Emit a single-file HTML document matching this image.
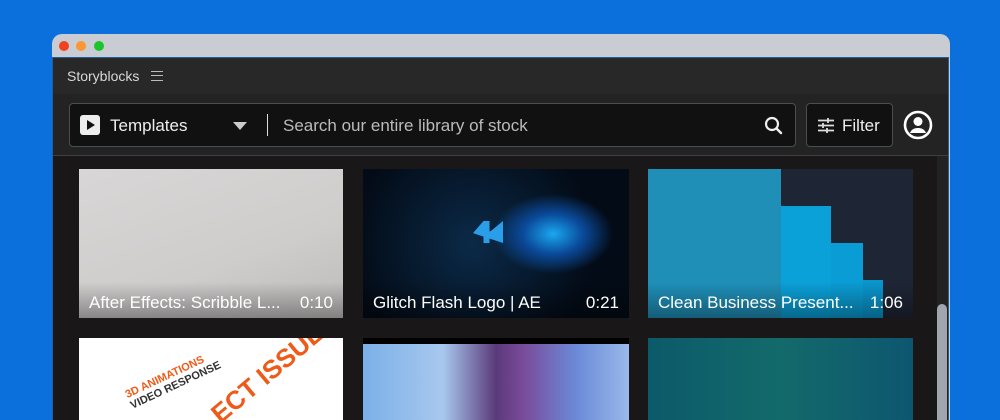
<!DOCTYPE html>
<html><head><meta charset="utf-8"><style>
*{margin:0;padding:0;box-sizing:border-box}
html,body{width:1000px;height:420px;overflow:hidden}
body{background:#0b6fdc;font-family:"Liberation Sans",sans-serif;position:relative}
.win{position:absolute;left:52px;top:34px;width:898px;height:386px;background:#c9cdd3;border-radius:10px 10px 0 0;overflow:hidden}
.dot{position:absolute;top:7px;width:10px;height:10px;border-radius:50%}
.app{position:absolute;left:0;top:23px;width:897px;height:363px;background:#1a1718;border:1px solid #1f5f9e;border-bottom:none;overflow:hidden}
.hdr{position:absolute;left:0;top:0;width:100%;height:36px;background:#282828;color:#d8d8d8;font-size:14px}
.bar{position:absolute;left:0;top:36px;width:100%;height:62px;background:#232323;border-bottom:1px solid #3d3f42}
.search{position:absolute;left:16px;top:9px;width:727px;height:44px;background:#111;border:1px solid #4a4e52;border-radius:4px}
.filter{position:absolute;left:753px;top:9px;width:87px;height:44px;background:#111;border:1px solid #4a4e52;border-radius:4px;color:#eee;font-size:17px}
.card{position:absolute;width:264px;height:149px;overflow:hidden}
.cap{position:absolute;left:0;right:0;bottom:0;height:36px;color:#fff;font-size:17px;padding:11px 10px 0;display:flex;justify-content:space-between;background:linear-gradient(transparent,rgba(0,0,0,.35))}
</style></head><body>
<div class="win">
<div class="dot" style="left:7px;background:#f0421f"></div>
<div class="dot" style="left:24px;background:#fa9634"></div>
<div class="dot" style="left:42px;background:#19c52b"></div>
<div class="app">
<div class="hdr"><span style="position:absolute;left:14px;top:10px">Storyblocks</span>
<span style="position:absolute;left:98px;top:13px;width:12px;height:10px;border-top:1.5px solid #bbb;border-bottom:1.5px solid #bbb"><span style="position:absolute;left:0;top:2.8px;width:12px;border-top:1.5px solid #bbb"></span></span></div>
<div class="bar">
<div class="search">
<div style="position:absolute;left:10px;top:11px;width:20px;height:20px;background:#eee;border-radius:3px"><div style="position:absolute;left:7px;top:5px;border-left:8px solid #111;border-top:5px solid transparent;border-bottom:5px solid transparent"></div></div>
<span style="position:absolute;left:40px;top:12px;color:#eee;font-size:17px">Templates</span>
<div style="position:absolute;left:163px;top:18px;border-top:8px solid #ccc;border-left:7px solid transparent;border-right:7px solid transparent"></div>
<div style="position:absolute;left:197px;top:10px;height:22px;border-left:1.5px solid #ddd"></div>
<span style="position:absolute;left:213px;top:12px;color:#bbb;font-size:17px">Search our entire library of stock</span>
<svg style="position:absolute;left:694px;top:12px" width="20" height="20" viewBox="0 0 20 20"><circle cx="8" cy="8" r="6" fill="none" stroke="#eee" stroke-width="2.2"/><path d="M12.5 12.5 17 17" stroke="#eee" stroke-width="2.4" stroke-linecap="round"/></svg>
</div>
<div class="filter">
<svg style="position:absolute;left:11px;top:14px" width="16" height="15" viewBox="0 0 16 15"><path d="M0 2.5h16M0 7.5h16M0 12.5h16" stroke="#ddd" stroke-width="1.8"/><path d="M10 0v5M5 5v5M9 10v5" stroke="#ddd" stroke-width="1.8"/></svg>
<span style="position:absolute;left:35px;top:12px">Filter</span></div>
<svg style="position:absolute;left:850px;top:16px" width="30" height="30" viewBox="0 0 30 30"><circle cx="15" cy="15" r="13" fill="none" stroke="#fff" stroke-width="2.6"/><circle cx="15" cy="11.5" r="4.5" fill="#fff"/><path d="M7 23c1.5-4 5-5 8-5s6.5 1 8 5z" fill="#fff"/></svg>
</div>
<div class="card" style="left:26px;top:111px;background:linear-gradient(160deg,#d8d6d6,#cfcccc 60%,#bdbbba)"><div class="cap" style="background:linear-gradient(transparent,rgba(90,90,90,.6))"><span>After Effects: Scribble L...</span><span>0:10</span></div></div>
<div class="card" style="left:310px;top:111px;width:266px;background:radial-gradient(ellipse 60px 40px at 190px 65px,#1aa8f0,#0a4a9a 50%,transparent 100%),radial-gradient(circle at 110px 75px,#0b2a48,#030b16 70%)"><div style="position:absolute;left:110px;top:52px;width:30px;height:22px;background:#2a9ee8;clip-path:polygon(0 55%,35% 0,55% 0,55% 100%,35% 100%,35% 60%,60% 45%,100% 0,100% 100%)"></div><div class="cap"><span>Glitch Flash Logo | AE</span><span>0:21</span></div></div>
<div class="card" style="left:595px;top:111px;width:265px;background:#1e2535"><div style="position:absolute;left:0;top:0;width:133px;height:149px;background:#1f8fb8"></div><div style="position:absolute;left:133px;top:37px;width:50px;height:112px;background:#0aa0d8"></div><div style="position:absolute;left:183px;top:74px;width:32px;height:75px;background:#0a9cd4"></div><div style="position:absolute;left:215px;top:111px;width:20px;height:38px;background:#0a96cc"></div><div class="cap"><span>Clean Business Present...</span><span>1:06</span></div></div>
<div class="card" style="left:26px;top:280px;background:#fff"><div style="position:absolute;left:45px;top:30px;transform:rotate(-25deg);color:#f05a18;font-weight:bold;font-size:11px;line-height:12px">3D ANIMATIONS<br><span style="color:#333">VIDEO RESPONSE</span></div><div style="position:absolute;left:120px;top:20px;transform:rotate(-40deg);color:#f05a18;font-weight:bold;font-size:26px">ECT ISSUE</div></div>
<div class="card" style="left:310px;top:280px;width:266px;background:linear-gradient(90deg,#7ab0e8,#a8c8ee 30%,#5a3a7a 50%,#7a4a9a 60%,#6a8ad8 80%,#9ab8ea);border-top:6px solid #000"></div>
<div class="card" style="left:595px;top:280px;width:265px;background:linear-gradient(90deg,#0b5a6a,#136a6a 50%,#0d5670)"></div>
<div style="position:absolute;left:884px;top:98px;width:11px;height:290px;background:#222"></div>
<div style="position:absolute;left:884px;top:246px;width:10px;height:140px;background:#a2a4ae;border-radius:5px 5px 0 0"></div>
</div></div>
</body></html>
